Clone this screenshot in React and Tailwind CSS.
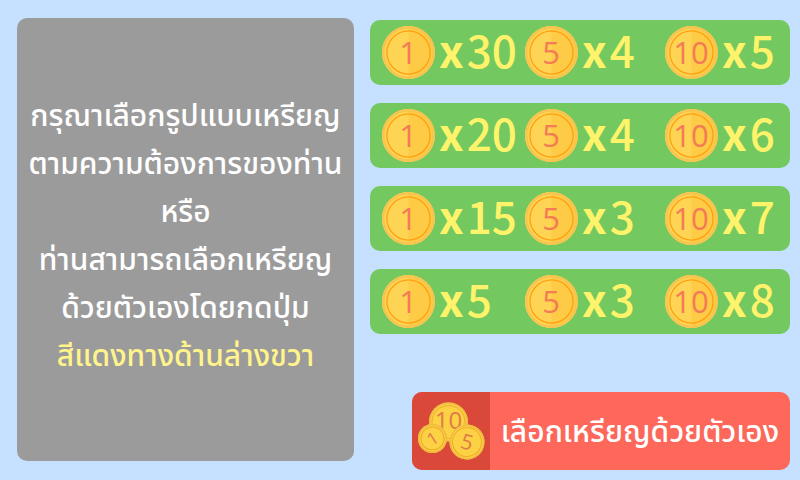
const PRESETS = [
  { id: "a", counts: [30, 4, 5] },
  { id: "b", counts: [20, 4, 6] },
  { id: "c", counts: [15, 3, 7] },
  { id: "d", counts: [5, 3, 8] },
];

const COINS = [1, 5, 10];

function Coin({ value }) {
  return (
    <svg viewBox="0 0 53 53" className="h-[53px] w-[53px] shrink-0">
      <circle cx="26.5" cy="26.5" r="26.5" fill="#fdcb45" />
      <path d="M26.5 0a26.5 26.5 0 0 0 0 53z" fill="#fed454" />
      <circle cx="26.5" cy="26.5" r="25.2" fill="none" stroke="#f5c551" strokeWidth="2.4" />
      <circle cx="26.5" cy="26.5" r="21.6" fill="none" stroke="#ff9f10" strokeWidth="1.3" />
      <text
        x="26"
        y="38"
        textAnchor="middle"
        fill="#f47b55"
        className="font-['Open_Sans','Noto_Sans',sans-serif] text-[31px] font-normal"
      >
        {value}
      </text>
    </svg>
  );
}

function CoinPile() {
  const coins = [
    { x: 48.5, y: 42, r: 19.5, value: 10, size: "text-[24px]", turn: 0, base: 6.5 },
    { x: 32.5, y: 58.5, r: 14.5, value: 1, size: "text-[17px]", turn: -33, base: 6 },
    { x: 67, y: 62, r: 17.5, value: 5, size: "text-[21px]", turn: 16, base: 7.5 },
  ];
  return (
    <svg viewBox="12 12 78 78" className="h-[78px] w-[78px]">
      {coins.map((c) => (
        <g key={c.value} transform={`translate(${c.x} ${c.y}) rotate(${c.turn})`}>
          <circle r={c.r} fill="#fcd143" />
          <circle r={c.r - 0.8} fill="none" stroke="#edbd42" strokeWidth="1.6" />
          <circle r={c.r - 3} fill="none" stroke="#f0a92c" strokeWidth="1" />
          <text
            y={c.base}
            textAnchor="middle"
            fill="#e07a4c"
            className={`font-['Open_Sans','Noto_Sans',sans-serif] font-normal ${c.size}`}
          >
            {c.value}
          </text>
        </g>
      ))}
    </svg>
  );
}

function Preset({ counts }) {
  return (
    <button
      type="button"
      className="grid h-[65px] w-full grid-cols-[143fr_140fr_125fr] items-center rounded-[10px] bg-[#73c95f] pl-3 text-left"
    >
      {COINS.map((coin, i) => (
        <span key={coin} className="flex items-center">
          <Coin value={coin} />
          <span className="ml-1 flex items-baseline gap-[3px] pb-2 font-['Noto_Sans_CJK_SC','Open_Sans',sans-serif] text-[44px] leading-none font-bold text-[#fff36b]">
            <span>x</span>
            <span className="font-medium">{counts[i]}</span>
          </span>
        </span>
      ))}
    </button>
  );
}

export default function App() {
  return (
    <main className="grid min-h-screen grid-cols-[337fr_420fr] gap-4 bg-[#c6e1ff] pt-[18px] pr-[10px] pb-[10px] pl-[17px] font-['Noto_Sans_Thai','Noto_Sans',sans-serif] font-medium">
      <section className="mb-[9px] flex flex-col items-center rounded-[10px] bg-[#9b9b9b] pt-[75px] text-center text-[30px] leading-[48px] whitespace-nowrap text-white">
        <p>กรุณาเลือกรูปแบบเหรียญ</p>
        <p>ตามความต้องการของท่าน</p>
        <p>หรือ</p>
        <p>ท่านสามารถเลือกเหรียญ</p>
        <p>ด้วยตัวเองโดยกดปุ่ม</p>
        <p className="text-[#fff48c]">สีแดงทางด้านล่างขวา</p>
      </section>
      <section className="flex flex-col items-end justify-between pt-[2px]">
        <div className="flex w-full flex-col gap-[18px]">
          {PRESETS.map((p) => (
            <Preset key={p.id} counts={p.counts} />
          ))}
        </div>
        <button
          type="button"
          className="flex h-[78px] w-9/10 items-center overflow-hidden rounded-[10px] bg-[#fd685b] text-white"
        >
          <span className="h-full bg-[#da4839]">
            <CoinPile />
          </span>
          <span className="flex-1 pt-1 text-center text-[30px] leading-[48px] whitespace-nowrap">
            เลือกเหรียญด้วยตัวเอง
          </span>
        </button>
      </section>
    </main>
  );
}
